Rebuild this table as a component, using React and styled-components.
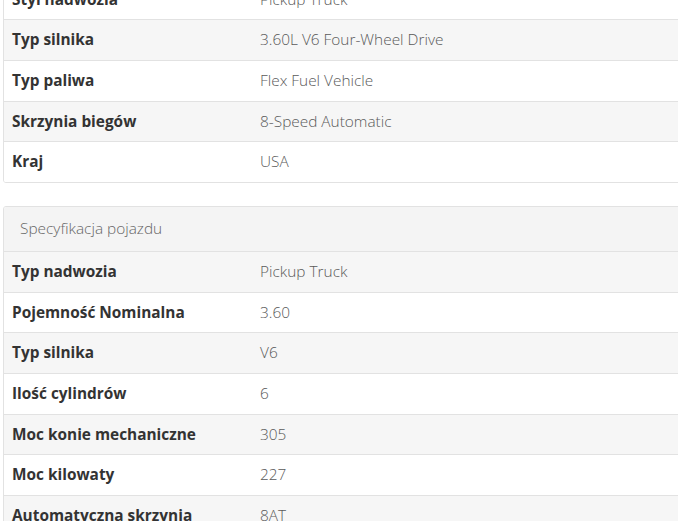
import React from "react";
import styled, { createGlobalStyle } from "styled-components";

const GlobalStyle = createGlobalStyle`
  html, body {
    margin: 0;
    padding: 0;
    background: #ffffff;
    overflow: hidden;
  }
  body {
    font-family: "Open Sans", "Liberation Sans", sans-serif;
  }
`;

const Page = styled.div`
  width: 720px;
  padding-left: 3px;
  display: flex;
  flex-direction: column;
  gap: 23px;
  /* page is scrolled: first card starts above the window */
  margin-top: -21.5px;
`;

const Card = styled.div`
  border: 1px solid #e2e2e2;
  border-radius: 3px;
  background: #fff;
  overflow: hidden;
`;

const CardHeader = styled.div`
  background: #f4f4f4;
  color: #666;
  font-size: 15.4px;
  font-weight: 300;
  padding: 10px 16px;
  line-height: 24px;
`;

const Row = styled.div`
  display: grid;
  grid-template-columns: 248px 1fr;
  padding: 8px 8px;
  line-height: 23.67px;
  font-size: 15.4px;
  background: ${(p) => (p.$shaded ? "#f6f6f6" : "#fff")};
  border-top: ${(p) => (p.$first ? "none" : "1px solid #e2e2e2")};
`;

const Label = styled.div`
  font-weight: 700;
  color: #333;
`;

const Value = styled.div`
  font-weight: 300;
  color: #5a5a5a;
`;

const general = [
  ["Styl nadwozia", "Pickup Truck"],
  ["Typ silnika", "3.60L V6 Four-Wheel Drive"],
  ["Typ paliwa", "Flex Fuel Vehicle"],
  ["Skrzynia biegów", "8-Speed Automatic"],
  ["Kraj", "USA"],
];

const spec = [
  ["Typ nadwozia", "Pickup Truck"],
  ["Pojemność Nominalna", "3.60"],
  ["Typ silnika", "V6"],
  ["Ilość cylindrów", "6"],
  ["Moc konie mechaniczne", "305"],
  ["Moc kilowaty", "227"],
  ["Automatyczna skrzynia", "8AT"],
  ["Napęd", "4WD"],
];

const SpecTable = ({ title, rows, shadeEven }) => (
  <Card>
    {title && <CardHeader>{title}</CardHeader>}
    {rows.map(([label, value], i) => (
      <Row
        key={label + i}
        $first={!title && i === 0}
        $shaded={shadeEven ? i % 2 === 0 : i % 2 === 1}
      >
        <Label>{label}</Label>
        <Value>{value}</Value>
      </Row>
    ))}
  </Card>
);

export default function App() {
  return (
    <>
      <GlobalStyle />
      <Page>
        <SpecTable rows={general} />
        <SpecTable title="Specyfikacja pojazdu" rows={spec} shadeEven />
      </Page>
    </>
  );
}
